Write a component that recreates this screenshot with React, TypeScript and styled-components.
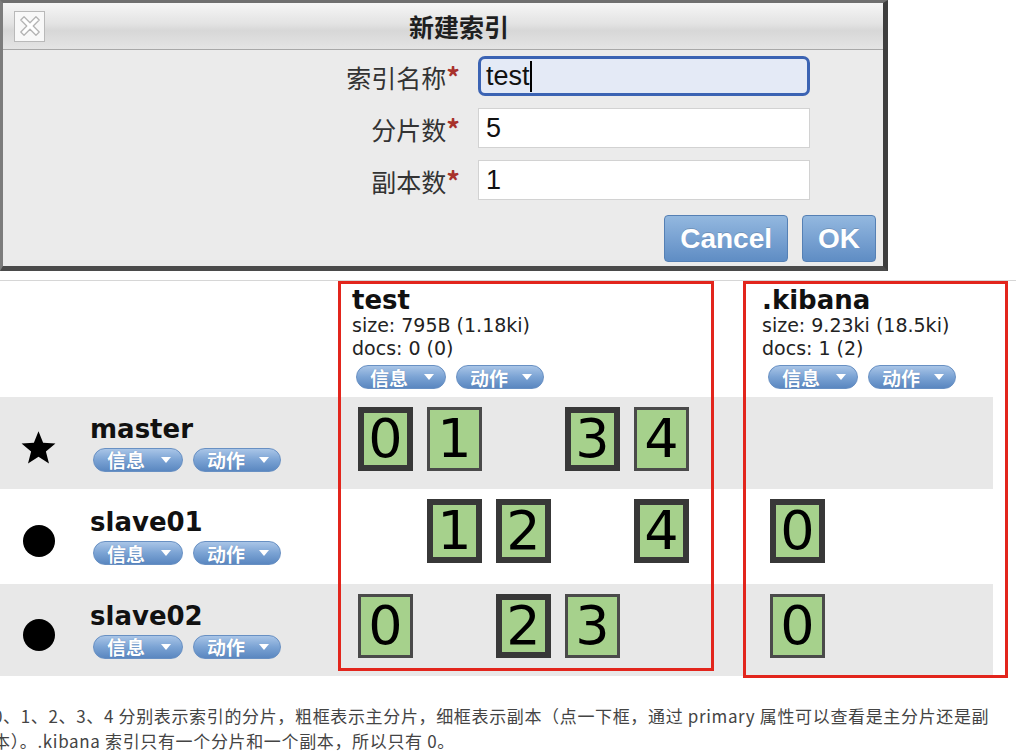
import styled, { createGlobalStyle } from 'styled-components'

const GlobalStyle = createGlobalStyle`
  html, body {
    margin: 0;
    padding: 0;
    background: #fff;
  }
  body {
    font-family: "DejaVu Sans", sans-serif;
  }
`

const Page = styled.div`
  width: 1016px;
  height: 752px;
  overflow: hidden;
  background: #fff;
`

/* ---------- dialog ---------- */

const Dialog = styled.div`
  width: 880px;
  border-style: solid;
  border-width: 3px 5px 5px 3px;
  border-color: #6f6f6f #3e3e3e #4a4a4a #7c7c7c;
  background: #ebebeb;
`

const TitleBar = styled.div`
  height: 46px;
  display: flex;
  align-items: center;
  padding: 0 10px 0 11px;
  border-bottom: 1px solid #a8a8a8;
  background: linear-gradient(#f6f6f6, #e3e3e3 45%, #d7d7d7 60%, #e4e4e4);
`

const CloseBox = styled.div`
  width: 31px;
  height: 31px;
  box-sizing: border-box;
  border: 1px solid #b9b9b9;
  background: #f8f8f8;
  display: flex;
  align-items: center;
  justify-content: center;
`

const Title = styled.div`
  flex: 1;
  text-align: center;
  font: bold 25px "Noto Sans CJK SC", sans-serif;
  color: #1f1f1f;
`

const Body = styled.div`
  padding: 6px 7px 4px 0;
`

const Form = styled.div`
  display: grid;
  grid-template-columns: 457px 332px;
  grid-auto-rows: 40px;
  column-gap: 18px;
  row-gap: 12px;
  align-items: center;
`

const Label = styled.div`
  text-align: right;
  font: 25px "Noto Sans CJK SC", sans-serif;
  color: #333;

  & > em {
    font-style: normal;
    font-weight: bold;
    font-size: 27px;
    color: #a8322c;
  }
`

interface FieldProps {
  $focused?: boolean
}

const Field = styled.div<FieldProps>`
  height: 40px;
  box-sizing: border-box;
  display: flex;
  align-items: center;
  padding-left: ${(p) => (p.$focused ? '5px' : '7px')};
  font: 27px "Liberation Sans", sans-serif;
  color: #111;
  background: ${(p) => (p.$focused ? '#e4eaf6' : '#fff')};
  border: ${(p) => (p.$focused ? '3px solid #3b63b3' : '1px solid #d2d2d2')};
  border-radius: ${(p) => (p.$focused ? '7px' : '0')};
`

const Caret = styled.span`
  width: 2px;
  height: 31px;
  background: #000;
`

const Actions = styled.div`
  display: flex;
  justify-content: flex-end;
  gap: 14px;
  margin-top: 15px;
`

const Button = styled.div`
  height: 47px;
  box-sizing: border-box;
  padding: 0 15px;
  display: flex;
  align-items: center;
  border: 1px solid #5580b4;
  border-radius: 4px;
  background: linear-gradient(#93b8df, #79a2d2 50%, #5f8dc4);
  color: #fff;
  font: bold 28px "Liberation Sans", sans-serif;
  text-shadow: 0 -1px 0 rgba(0, 0, 0, 0.15);
`

/* ---------- cluster overview ---------- */

const Cluster = styled.div`
  margin-top: 9px;
  border-top: 1px solid #d6d6d6;
  display: grid;
  grid-template-columns: 338px 376px 29px 250px 15px;
  grid-template-rows: 116px 92px 95px 92px;
`

interface BandProps {
  $row: number
  $shade: boolean
}

const Band = styled.div<BandProps>`
  grid-row: ${(p) => p.$row};
  grid-column: 1 / 5;
  background: ${(p) => (p.$shade ? '#e8e8e8' : '#fff')};
`

interface CellProps {
  $row: number
  $col: number
}

const IndexHeader = styled.div<CellProps & { $inset: number }>`
  grid-row: ${(p) => p.$row};
  grid-column: ${(p) => p.$col};
  padding: 5px 0 0 ${(p) => p.$inset}px;
  font: 19px/23px "DejaVu Sans", sans-serif;
  color: #222;
`

const IndexName = styled.div`
  font: bold 26px/28px "DejaVu Sans", sans-serif;
  color: #111;
`

const PillRow = styled.div<{ $indent: number }>`
  display: flex;
  gap: 10px;
  margin-top: 5px;
  margin-left: ${(p) => p.$indent}px;
`

const Pill = styled.div<{ $width: number }>`
  width: ${(p) => p.$width}px;
  height: 24px;
  box-sizing: border-box;
  display: flex;
  align-items: center;
  justify-content: space-between;
  padding: 0 11px 0 13px;
  border: 1px solid #6890c3;
  border-radius: 12px;
  background: linear-gradient(#a9c5e7, #7ba3d4 50%, #5a87c0);
  color: #fff;
`

const PillText = styled.span`
  margin-top: 1px;
  font: bold 19px/22px "Noto Sans CJK SC", sans-serif;
  text-shadow: 0 0 1px rgba(40, 70, 120, 0.4);
`

const NodeCell = styled.div<{ $row: number }>`
  grid-row: ${(p) => p.$row};
  grid-column: 1;
  display: flex;
  align-items: center;
  padding-left: 20px;
`

const IconBox = styled.div`
  width: 37px;
  margin-top: 9px;
  display: flex;
  justify-content: center;
`

const Dot = styled.div`
  width: 32px;
  height: 32px;
  border-radius: 50%;
  background: #000;
`

const NodeInfo = styled.div`
  margin-left: 33px;
`

const NodeName = styled.div`
  font: bold 26px/28px "DejaVu Sans", sans-serif;
  color: #111;
  margin-bottom: 1px;
`

const ShardRow = styled.div<CellProps & { $inset: number }>`
  grid-row: ${(p) => p.$row};
  grid-column: ${(p) => p.$col};
  display: flex;
  align-items: flex-start;
  gap: 14px;
  padding: 10px 0 0 ${(p) => p.$inset}px;
`

const Shard = styled.div<{ $primary: boolean }>`
  width: 55px;
  height: 64px;
  box-sizing: border-box;
  display: flex;
  align-items: center;
  justify-content: center;
  border: ${(p) => (p.$primary ? '6px solid #383838' : '3px solid #4a4a4a')};
  background: #a6d18c;
  font: 54px/1 "DejaVu Sans", sans-serif;
  color: #000;
`

const EmptySlot = styled.div`
  width: 55px;
  height: 64px;
`

const Highlight = styled.div<{ $cols: string; $bottom: number }>`
  grid-row: 1 / 5;
  grid-column: ${(p) => p.$cols};
  margin-bottom: ${(p) => p.$bottom}px;
  border: 3px solid #e2251c;
  pointer-events: none;
  z-index: 1;
`

const Caption = styled.div`
  margin: 27px 0 0 -7px;
  font: 17px/25px "Noto Sans CJK SC", sans-serif;
  letter-spacing: 0.65px;
  color: #444;
  white-space: nowrap;
`

/* ---------- data ---------- */

type Copy = 'P' | 'R' | null

interface NodeData {
  name: string
  master: boolean
  test: Copy[]
  kibana: Copy[]
}

const nodes: NodeData[] = [
  { name: 'master', master: true, test: ['P', 'R', null, 'P', 'R'], kibana: [null] },
  { name: 'slave01', master: false, test: [null, 'P', 'P', null, 'P'], kibana: ['P'] },
  { name: 'slave02', master: false, test: ['R', null, 'P', 'R', null], kibana: ['R'] },
]

const indices = [
  { name: 'test', size: 'size: 795B (1.18ki)', docs: 'docs: 0 (0)', col: 2, inset: 14, pillIndent: 4, shardInset: 20, key: 'test' as const },
  { name: '.kibana', size: 'size: 9.23ki (18.5ki)', docs: 'docs: 1 (2)', col: 4, inset: 19, pillIndent: 6, shardInset: 27, key: 'kibana' as const },
]

/* ---------- icons ---------- */

const CloseIcon = () => (
  <svg width="26" height="26" viewBox="0 0 24 24">
    <path
      d="M3.5 6.5 L6.5 3.5 L12 9 L17.5 3.5 L20.5 6.5 L15 12 L20.5 17.5 L17.5 20.5 L12 15 L6.5 20.5 L3.5 17.5 L9 12 Z"
      fill="#fff"
      stroke="#b4b4b4"
      strokeWidth="1.2"
      strokeLinejoin="round"
    />
  </svg>
)

const StarIcon = () => (
  <svg width="37" height="36" viewBox="0 0 24 23">
    <polygon points="12,0.6 15,8.1 23,8.6 16.8,13.7 18.8,21.6 12,17.2 5.2,21.6 7.2,13.7 1,8.6 9,8.1" fill="#000" />
  </svg>
)

const DownCaret = () => (
  <svg width="10" height="6" viewBox="0 0 10 6">
    <polygon points="0,0 10,0 5,6" fill="#fff" />
  </svg>
)

const ActionPills = ({ indent }: { indent: number }) => (
  <PillRow $indent={indent}>
    <Pill $width={90}>
      <PillText>信息</PillText>
      <DownCaret />
    </Pill>
    <Pill $width={88}>
      <PillText>动作</PillText>
      <DownCaret />
    </Pill>
  </PillRow>
)

const App = () => {
  return (
    <Page>
      <GlobalStyle />
      <Dialog>
        <TitleBar>
          <CloseBox>
            <CloseIcon />
          </CloseBox>
          <Title>新建索引</Title>
        </TitleBar>
        <Body>
          <Form>
            <Label>
              索引名称<em>*</em>
            </Label>
            <Field $focused>
              test
              <Caret />
            </Field>
            <Label>
              分片数<em>*</em>
            </Label>
            <Field>5</Field>
            <Label>
              副本数<em>*</em>
            </Label>
            <Field>1</Field>
          </Form>
          <Actions>
            <Button>Cancel</Button>
            <Button>OK</Button>
          </Actions>
        </Body>
      </Dialog>

      <Cluster>
        <Band $row={1} $shade={false} />
        <Band $row={2} $shade />
        <Band $row={3} $shade={false} />
        <Band $row={4} $shade />

        {indices.map((idx) => (
          <IndexHeader key={idx.key} $row={1} $col={idx.col} $inset={idx.inset}>
            <IndexName>{idx.name}</IndexName>
            <div>{idx.size}</div>
            <div>{idx.docs}</div>
            <ActionPills indent={idx.pillIndent} />
          </IndexHeader>
        ))}

        {nodes.map((node, i) => (
          <NodeCell key={node.name} $row={i + 2}>
            <IconBox>{node.master ? <StarIcon /> : <Dot />}</IconBox>
            <NodeInfo>
              <NodeName>{node.name}</NodeName>
              <ActionPills indent={3} />
            </NodeInfo>
          </NodeCell>
        ))}

        {nodes.map((node, i) =>
          indices.map((idx) => (
            <ShardRow key={node.name + idx.key} $row={i + 2} $col={idx.col} $inset={idx.shardInset}>
              {node[idx.key].map((copy, n) =>
                copy ? (
                  <Shard key={n} $primary={copy === 'P'}>
                    {n}
                  </Shard>
                ) : (
                  <EmptySlot key={n} />
                ),
              )}
            </ShardRow>
          )),
        )}

        <Highlight $cols="2 / 3" $bottom={5} />
        <Highlight $cols="4 / 6" $bottom={-2} />
      </Cluster>

      <Caption>
        0、1、2、3、4 分别表示索引的分片，粗框表示主分片，细框表示副本（点一下框，通过 primary 属性可以查看是主分片还是副
        <br />
        本）。.kibana 索引只有一个分片和一个副本，所以只有 0。
      </Caption>
    </Page>
  )
}

export default App
